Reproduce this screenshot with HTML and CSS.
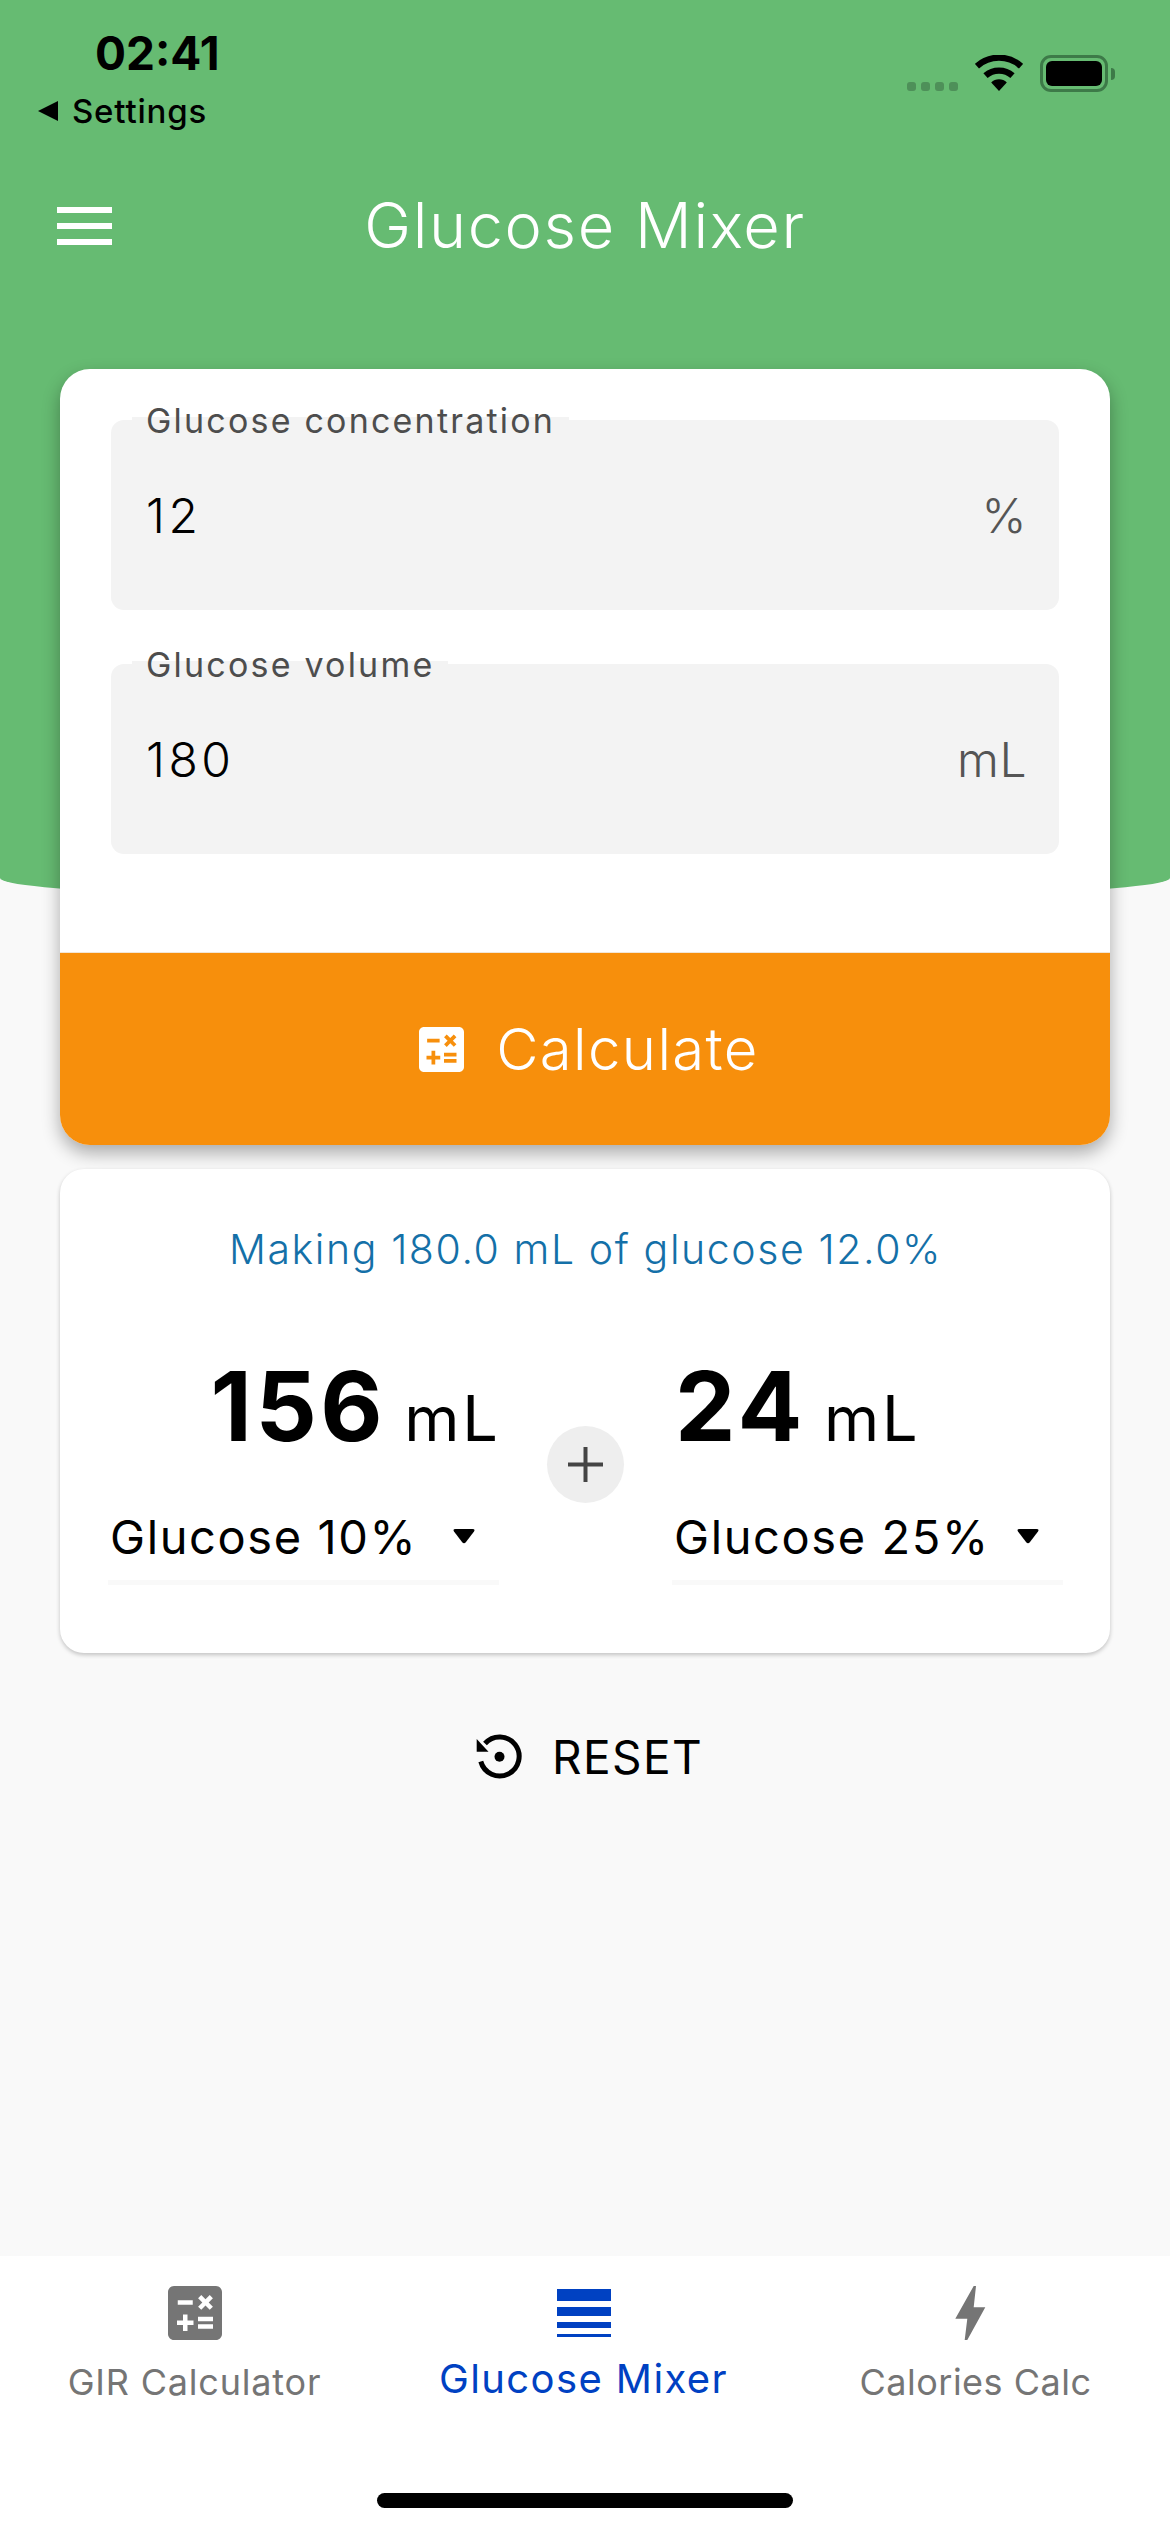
FILE: index.html
```html
<!DOCTYPE html>
<html lang="en">
<head>
<meta charset="utf-8">
<title>Glucose Mixer</title>
<link rel="stylesheet" href="styles.css">
</head>
<body>
<div class="screen">
  <div class="green-bg"></div>

  <header class="status">
    <div class="status-left">
      <div class="time">02:41</div>
      <div class="back">
        <svg class="back-arrow" viewBox="0 0 20 20"><path d="M0 10 20 0V20Z"/></svg>
        <span>Settings</span>
      </div>
    </div>
    <div class="status-right">
      <div class="signal"><i></i><i></i><i></i><i></i></div>
      <svg class="wifi" viewBox="0 0 48 36">
        <path class="wifi-arc" d="M1.9 11.2A33 33 0 0 1 46.1 11.2"/>
        <path class="wifi-arc" d="M10.5 20.7A20.2 20.2 0 0 1 37.5 20.7"/>
        <path d="M24 36 16.2 27.6A11 11 0 0 1 31.8 27.6Z"/>
      </svg>
      <div class="battery"><div class="battery-fill"></div></div>
      <div class="battery-nub"></div>
    </div>
  </header>

  <div class="appbar">
    <div class="menu"><i></i><i></i><i></i></div>
    <h1 class="title">Glucose Mixer</h1>
  </div>

  <main class="content">
    <section class="card form-card">
      <div class="fields">
        <div class="field">
          <span class="field-label">Glucose concentration</span>
          <span class="field-value">12</span>
          <span class="field-unit">%</span>
        </div>
        <div class="field">
          <span class="field-label">Glucose volume</span>
          <span class="field-value">180</span>
          <span class="field-unit">mL</span>
        </div>
      </div>
      <button class="calc-btn">
        <svg class="calc-icon" viewBox="3 3 18 18"><path d="M19 3H5c-1.1 0-2 .9-2 2v14c0 1.1.9 2 2 2h14c1.1 0 2-.9 2-2V5c0-1.1-.9-2-2-2zm-5.97 4.06L14.09 6l1.41 1.41L16.91 6l1.06 1.06-1.41 1.41 1.41 1.41-1.06 1.06-1.41-1.4-1.41 1.41-1.06-1.06 1.41-1.41-1.41-1.42zm-6.78.66h5v1.5h-5v-1.5zM11.5 16h-2v2H8v-2H6v-1.5h2v-2h1.5v2h2V16zm6.5 1.25h-5v-1.5h5v1.5zm0-2.5h-5v-1.5h5v1.5z"/></svg>
        <span>Calculate</span>
      </button>
    </section>

    <section class="card result-card">
      <p class="making">Making 180.0 mL of glucose 12.0%</p>
      <div class="mix">
        <div class="mix-col">
          <div class="amount amount-left"><b>156</b><span>mL</span></div>
          <div class="select">
            <span>Glucose 10%</span>
            <svg class="caret" viewBox="0 0 22 15"><path d="M2.5 0H19.500Q22.500 0 21 2.500L13 13Q11 15.500 9 13L1 2.500Q-.5 0 2.500 0Z"/></svg>
          </div>
        </div>
        <div class="plus"><svg viewBox="0 0 35 35"><path d="M17.500 0V35M0 17.500H35"/></svg></div>
        <div class="mix-col">
          <div class="amount amount-right"><b>24</b><span>mL</span></div>
          <div class="select">
            <span>Glucose 25%</span>
            <svg class="caret" viewBox="0 0 22 15"><path d="M2.5 0H19.500Q22.500 0 21 2.500L13 13Q11 15.500 9 13L1 2.500Q-.5 0 2.500 0Z"/></svg>
          </div>
        </div>
      </div>
    </section>

    <div class="reset">
      <svg class="reset-icon" viewBox="0 0 46 46">
        <path class="reset-arc" d="M4.800 27.500A19.500 19.500 0 1 0 9 9.500"/>
        <path d="M.7 5 .7 17.700 12.500 17.700Z"/>
        <circle cx="23.500" cy="22.700" r="5"/>
      </svg>
      <span>RESET</span>
    </div>
  </main>

  <footer class="tabs">
    <div class="tab-row">
      <div class="tab">
        <svg class="tab-icon" viewBox="3 3 18 18"><path d="M19 3H5c-1.1 0-2 .9-2 2v14c0 1.1.9 2 2 2h14c1.1 0 2-.9 2-2V5c0-1.1-.9-2-2-2zm-5.970 4.060L14.090 6l1.410 1.410L16.910 6l1.060 1.060-1.410 1.410 1.410 1.410-1.060 1.060-1.410-1.400-1.410 1.410-1.060-1.060 1.410-1.410-1.410-1.420zm-6.780.660h5v1.500h-5v-1.500zM11.500 16h-2v2H8v-2H6v-1.500h2v-2h1.500v2h2V16zm6.500 1.250h-5v-1.500h5v1.500zm0-2.500h-5v-1.500h5v1.500z"/></svg>
        <span class="tab-label">GIR Calculator</span>
      </div>
      <div class="tab tab-active">
        <div class="stack"><i></i><i></i><i></i><i></i></div>
        <span class="tab-label">Glucose Mixer</span>
      </div>
      <div class="tab tab-calories">
        <svg class="tab-icon" viewBox="0 0 54 54"><path d="M24.700 0H27L24.700 21.300H36.300L18.300 54H15.700L18.300 32.700H6.300Z"/></svg>
        <span class="tab-label">Calories Calc</span>
      </div>
    </div>
    <div class="home-indicator"></div>
  </footer>
</div>
</body>
</html>
```
FILE: styles.css
```css
* { box-sizing: border-box; }
html, body { margin: 0; padding: 0; }
body { font-family: Inter, "Liberation Sans", sans-serif; background: #f9f9f9; }

.screen {
  position: relative;
  width: 1170px;
  height: 2532px;
  overflow: hidden;
  display: flex;
  flex-direction: column;
  background: #f9f9f9;
}
.green-bg {
  position: absolute;
  left: 0;
  top: 0;
  width: 1170px;
  height: 902px;
  background: #66bb72;
  border-radius: 0 0 50% 50% / 0 0 24px 24px;
}

/* status bar */
.status {
  position: relative;
  height: 140px;
  display: flex;
  justify-content: space-between;
  color: #000;
}
.status-left { padding: 26px 0 0 38px; }
.time {
  margin-left: 57px;
  font-size: 46px;
  font-weight: 700;
  line-height: 54px;
}
.back {
  display: flex;
  align-items: center;
  gap: 14px;
  margin-top: 11px;
  font-size: 33px;
  font-weight: 500;
  line-height: 40px;
  letter-spacing: .8px;
}
.back-arrow { width: 20px; height: 20px; fill: #000; }
.status-right {
  display: flex;
  align-items: flex-start;
  padding: 55px 55px 0 0;
}
.signal { display: flex; gap: 5px; margin: 27px 17px 0 0; }
.signal i { width: 9px; height: 9px; border-radius: 3px; background: #4e9059; }
.wifi { width: 48px; height: 36px; fill: #000; margin-right: 17px; }
.wifi-arc { fill: none; stroke: #000; stroke-width: 6.3; }
.battery {
  width: 68px;
  height: 37px;
  padding: 3px;
  border: 3px solid #3d7a48;
  border-radius: 11px;
}
.battery-fill { width: 100%; height: 100%; background: #000; border-radius: 6px; }
.battery-nub {
  width: 4px;
  height: 12px;
  margin: 13px 0 0 3px;
  background: #3d7a48;
  border-radius: 0 6px 6px 0;
}

/* app bar */
.appbar {
  position: relative;
  height: 170px;
  display: flex;
  align-items: center;
  justify-content: center;
}
.menu {
  position: absolute;
  left: 57px;
  top: 67px;
  width: 55px;
  display: flex;
  flex-direction: column;
  gap: 10px;
}
.menu i { height: 6px; background: #fff; }
.title {
  margin: 0;
  color: #fff;
  font-size: 63px;
  font-weight: 300;
  line-height: 76px;
  letter-spacing: 1.6px;
}

/* content */
.content {
  position: relative;
  flex: 1;
  padding: 59px 60px 0;
}
.card { background: #fff; }
.form-card {
  border-radius: 30px;
  box-shadow: 0 8px 18px rgba(0, 0, 0, .32);
  overflow: hidden;
}
.fields {
  display: flex;
  flex-direction: column;
  gap: 54px;
  padding: 51px 51px 98px;
}
.field {
  position: relative;
  height: 190px;
  padding: 0 32px 0 35px;
  display: flex;
  align-items: center;
  justify-content: space-between;
  background: #f3f3f3;
  border-radius: 13px;
}
.field-label {
  position: absolute;
  z-index: 1;
  left: 21px;
  top: 1px;
  padding: 0 14px;
  color: #4d4d4d;
  font-size: 34px;
  font-weight: 400;
  line-height: 0;
  letter-spacing: 2.2px;
}
.field-label::before {
  content: "";
  position: absolute;
  z-index: -1;
  left: 0;
  right: 0;
  top: -4px;
  height: 3px;
  background: #f3f3f3;
}
.field-value { font-size: 48px; font-weight: 350; letter-spacing: 3.500px; color: #000; }
.field-unit { font-size: 48px; font-weight: 350; letter-spacing: .5px; color: #555; }
.calc-btn {
  width: 100%;
  height: 193px;
  padding: 0 0 0 8px;
  display: flex;
  align-items: center;
  justify-content: center;
  gap: 32px;
  border: 0;
  border-top: 1px solid #f3e6d6;
  background: #f78f0c;
  color: #fff;
  font-family: inherit;
  font-size: 58px;
  font-weight: 300;
  letter-spacing: 1.4px;
}
.calc-icon { width: 45px; height: 45px; fill: #fff; }

.result-card {
  position: relative;
  height: 484px;
  margin-top: 24px;
  padding: 55px 47px 0 48px;
  border-radius: 24px;
  box-shadow: 0 2px 4px rgba(0, 0, 0, .22);
}
.making {
  margin: 0;
  text-align: center;
  color: #1470a8;
  font-size: 41px;
  font-weight: 350;
  line-height: 50px;
  letter-spacing: 1.600px;
}
.mix {
  display: flex;
  align-items: center;
  justify-content: space-between;
  margin-top: 76px;
}
.mix-col { width: 391px; }
.amount {
  display: flex;
  align-items: baseline;
  gap: 18px;
  height: 112px;
  line-height: 112px;
  color: #000;
}
.amount b { font-size: 96px; font-weight: 700; letter-spacing: 3.500px; }
.amount span { font-size: 63px; font-weight: 400; letter-spacing: 3px; }
.amount-left { justify-content: flex-end; margin-right: -2px; }
.amount-right { padding-left: 3px; }
.select {
  display: flex;
  align-items: center;
  justify-content: space-between;
  height: 85px;
  margin-top: 38px;
  padding: 0 24px 7px 2px;
  color: #000;
  font-size: 47px;
  letter-spacing: 1.600px;
  border-bottom: 5px solid #f9f9f9;
}
.caret { width: 22px; height: 15px; fill: #000; }
.plus {
  width: 77px;
  height: 77px;
  margin-top: -6px;
  display: flex;
  align-items: center;
  justify-content: center;
  border-radius: 50%;
  background: #eee;
}
.plus svg { width: 35px; height: 35px; fill: none; stroke: #444; stroke-width: 4; }

.reset {
  display: flex;
  align-items: center;
  justify-content: center;
  gap: 30px;
  margin-top: 76px;
  padding-left: 9px;
  color: #000;
  font-size: 46px;
  font-weight: 400;
  letter-spacing: 1.4px;
}
.reset-icon { width: 46px; height: 46px; fill: #000; }
.reset-arc { fill: none; stroke: #000; stroke-width: 5; }

/* tabs */
.tabs {
  position: relative;
  height: 276px;
  background: #fff;
}
.tab-row { display: flex; padding-top: 30px; }
.tab {
  flex: 1;
  display: flex;
  flex-direction: column;
  align-items: center;
  gap: 20px;
  color: #757575;
  font-size: 36px;
  line-height: 44px;
  letter-spacing: .8px;
}
.tab-active { color: #0041c2; font-size: 40px; gap: 17px; letter-spacing: 1.4px; }
.tab-calories { letter-spacing: .5px; padding-left: 3px; }
.tab-icon { width: 54px; height: 54px; fill: #757575; }
.stack {
  width: 54px;
  height: 54px;
  display: flex;
  flex-direction: column;
  gap: 6px;
  padding-top: 3px;
}
.stack i { background: #0041c2; display: block; }
.stack i:nth-child(1) { height: 12px; }
.stack i:nth-child(2) { height: 9px; }
.stack i:nth-child(3) { height: 6px; }
.stack i:nth-child(4) { height: 3px; }
.home-indicator {
  position: absolute;
  left: 377px;
  bottom: 24px;
  width: 416px;
  height: 15px;
  border-radius: 8px;
  background: #000;
}
```
